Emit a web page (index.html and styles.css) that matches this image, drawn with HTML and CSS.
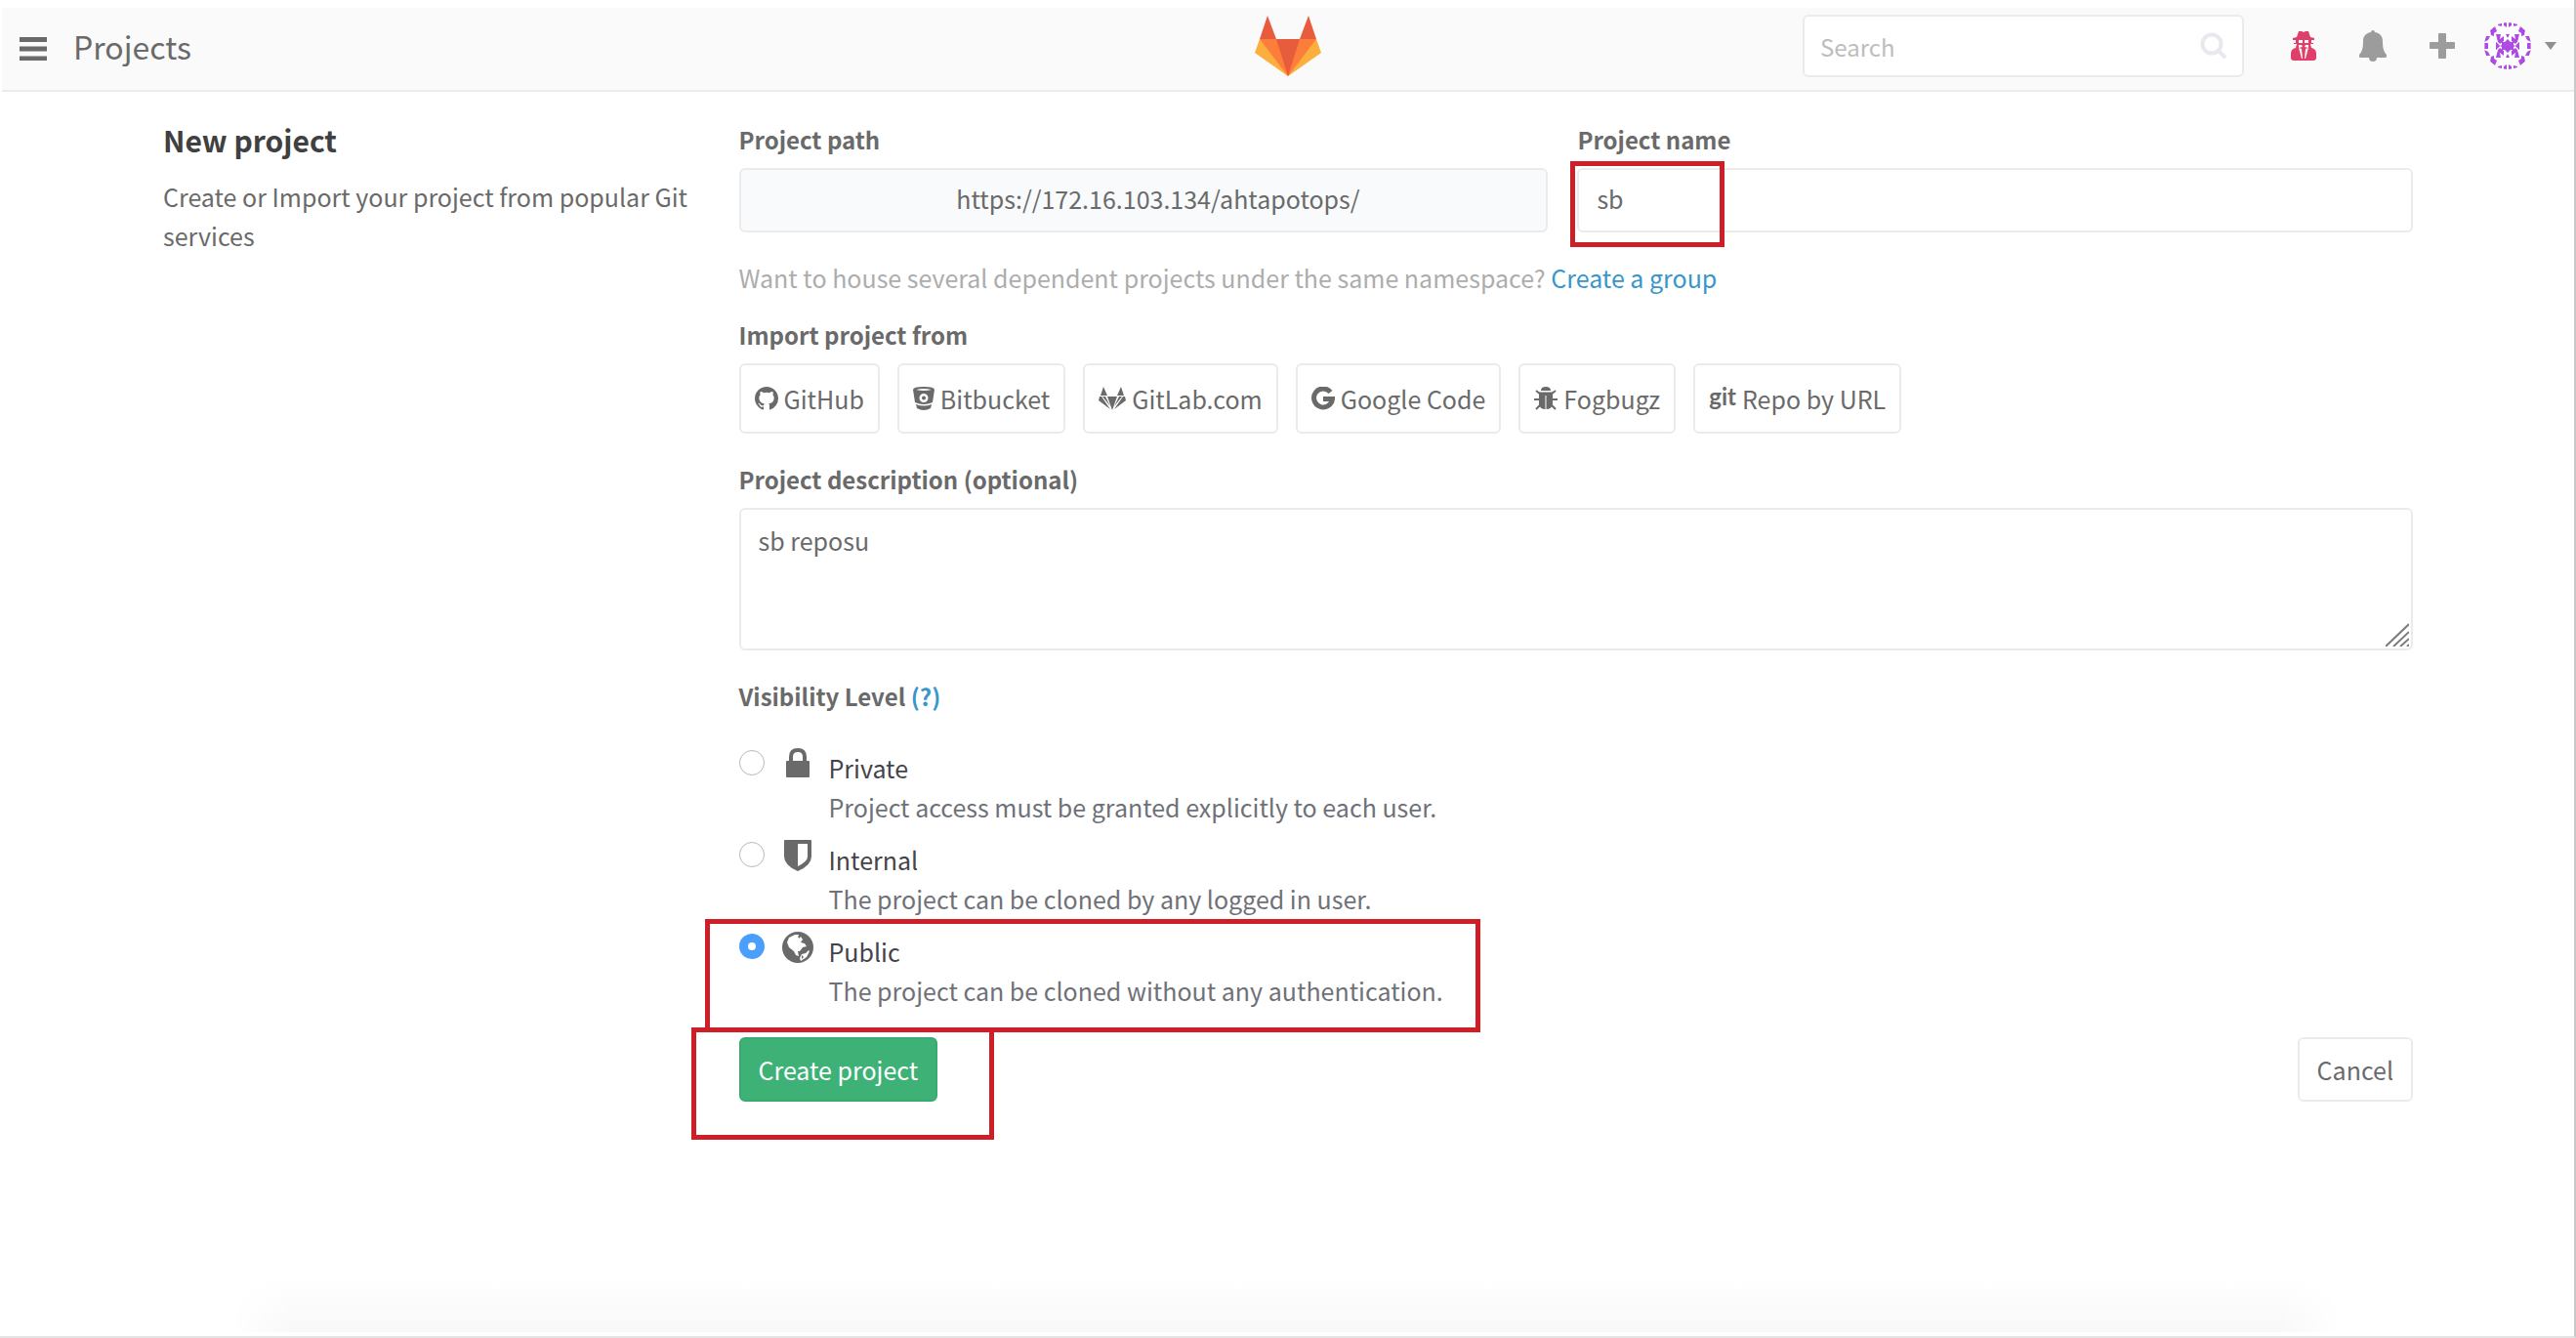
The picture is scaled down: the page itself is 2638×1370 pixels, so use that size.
FILE: index.html
```html
<!DOCTYPE html>
<html lang="en">
<head>
<meta charset="utf-8">
<title>New project</title>
<link rel="stylesheet" href="styles.css">
</head>
<body>
<header class="navbar">
  <div class="nav-side">
    <button class="icon-btn" type="button" aria-label="Menu">
      <svg width="28" height="24" viewBox="0 0 28 24" fill="#6a6a6a"><path d="M0 0h28v5H0zM0 9.500h28v5H0zM0 19.500h28v5H0z"/></svg>
    </button>
    <h1 class="page-name">Projects</h1>
  </div>
  <a class="logo" href="#" aria-label="Home">
    <svg width="68" height="62" viewBox="0 0 68 62">
      <path fill="#fcaf3e" d="M5 24 0 38l34 24 34-24-5-14z"/>
      <path fill="#fd7e3a" d="M5 24h58L34 62z"/>
      <path fill="#e65c3c" d="M22 24h24L34 62zM5 24 13 0l9 24zM63 24 55 0l-9 24z"/>
    </svg>
  </a>
  <div class="nav-side nav-end">
    <label class="search">
      <input type="search" placeholder="Search" aria-label="Search">
      <svg width="28" height="28" viewBox="0 0 28 28" fill="none" stroke="#e7e9ef" stroke-width="4" stroke-linecap="round"><circle cx="12" cy="12" r="9.500"/><path d="m19 19 6 6"/></svg>
    </label>
    <nav class="tools">
      <a href="#" aria-label="Admin area"><svg width="26" height="30" viewBox="0 0 26 30">
        <path fill="#df3f68" d="M8 0h3l2 1 2-1h3l2 6 4 1v2h-3v3h2v1h-3l1 4q5 1 5 6v4q0 3-3 3H3q-3 0-3-3v-4q0-5 5-6l1-4H3v-1h2V9H2V7l4-1z"/>
        <path fill="#fafafa" d="M8 9h4v3H8zM14 9h4v3h-4zM8 14h3l1 2-4 1zM15 14h3v3l-4-1zM8 17l3 1 1 10h-1zM18 17l-3 1-1 10h1z"/></svg></a>
      <a href="#" aria-label="Notifications"><svg width="28" height="32" viewBox="0 0 28 32"><path fill="#9c9c9c" d="M12 2a2 2 0 0 1 4 0c6 1 8 5 8 9 0 7 1 11 4 14v2q0 1-1 1h-9a4 4 0 0 1-8 0H1q-1 0-1-1v-2c3-3 4-7 4-14 0-4 2-8 8-9z"/></svg></a>
      <a href="#" aria-label="New"><svg width="26" height="26" viewBox="0 0 26 26"><path fill="#9c9c9c" d="M10 0h6q1 0 1 1v8h8q1 0 1 1v5q0 1-1 1h-8v9q0 1-1 1h-6q-1 0-1-1v-9H1q-1 0-1-1v-5q0-1 1-1h8V1q0-1 1-1z"/></svg></a>
      <a class="account" href="#" aria-label="Account">
        <svg width="48" height="48" viewBox="0 0 48 48">
          <defs><clipPath id="round"><circle cx="24" cy="24" r="24"/></clipPath></defs>
          <g clip-path="url(#round)"><path fill="#fff" d="M0 0h48v48H0z"/>
          <g fill="#ae4be3">
            <path id="corner" d="M12 12h5l-1 5 4-3v5l-4 3-2-2zM0 14l6 0-2 4-4 2zM1 22l3 1v4H0zM14 0l4 1v3l-4-1zM20 0h3v5l-3-2zM6 8l5-4 2 5-6 4zM7 13l3-2v3zM12 20l4 4-4 4z"/>
            <use href="#corner" transform="matrix(-1 0 0 1 48 0)"/>
            <use href="#corner" transform="matrix(1 0 0 -1 0 48)"/>
            <use href="#corner" transform="matrix(-1 0 0 -1 48 48)"/>
            <path d="m24 17 3 3h3v3l2 1-2 1v3h-3l-3 3-3-3h-3v-3l-2-1 2-1v-3h3zM22 12h4l-2 4zM22 36h4l-2-4z"/>
          </g></g>
        </svg>
        <svg width="12" height="8" viewBox="0 0 12 8"><path fill="#8f8f8f" d="M0 0h12L6 8z"/></svg>
      </a>
    </nav>
  </div>
</header>

<main class="content">
  <section class="intro">
    <h2>New project</h2>
    <p>Create or Import your project from popular Git services</p>
  </section>

  <form class="project-form">
    <div class="path-row">
      <div class="field">
        <label for="path">Project path</label>
        <input id="path" class="control path" type="text" value="https://172.16.103.134/ahtapotops/" readonly>
      </div>
      <div class="field marked name-field">
        <label for="name">Project name</label>
        <input id="name" class="control" type="text" value="sb">
      </div>
    </div>
    <p class="hint">Want to house several dependent projects under the same namespace? <a href="#">Create a group</a></p>

    <div class="field imports">
      <h3>Import project from</h3>
      <div class="import-list">
        <a class="btn" href="#"><svg width="24" height="24" viewBox="0 0 16 16"><path d="M8 0C3.580 0 0 3.580 0 8c0 3.540 2.290 6.530 5.470 7.590.4.070.550-.170.550-.380 0-.190-.010-.820-.010-1.490-2.010.370-2.530-.490-2.690-.940-.090-.230-.480-.940-.820-1.130-.280-.150-.680-.520-.010-.530.630-.010 1.080.580 1.230.820.720 1.210 1.870.870 2.330.660.070-.520.280-.870.510-1.070-1.780-.200-3.640-.890-3.640-3.950 0-.870.310-1.590.820-2.150-.080-.200-.360-1.020.080-2.120 0 0 .670-.210 2.200.820a7.600 7.600 0 0 1 4 0c1.530-1.040 2.200-.820 2.200-.820.440 1.100.160 1.920.080 2.120.510.560.820 1.270.820 2.150 0 3.070-1.870 3.750-3.650 3.950.290.250.540.730.540 1.480 0 1.070-.010 1.930-.010 2.200 0 .210.150.460.550.380A8 8 0 0 0 16 8c0-4.420-3.580-8-8-8z"/></svg>GitHub</a>
        <a class="btn" href="#"><svg width="22" height="24" viewBox="0 0 22 24"><path fill-rule="evenodd" d="M0 3q0-3 11-3t11 3l-2 13q-9 4-18 0zM3 3q8 2 16 0-8-2-16 0zM11 7a4.500 4.500 0 1 0 0 9 4.500 4.500 0 0 0 0-9zm0 2.500a2 2 0 1 1 0 4 2 2 0 0 1 0-4zM3 18q8 3 16 0l-1 4q-7 4-14 0z"/></svg>Bitbucket</a>
        <a class="btn" href="#"><svg width="28" height="24" viewBox="0 0 28 24"><path d="M5 0l4 9H2zM23 0l3 9h-7zM1 10l2 0 9 13L0 14zM27 10l-2 0-9 13 12-9zM4 10h3l5 10zM24 10h-3l-5 10zM9 10h10l-5 14z"/></svg>GitLab.com</a>
        <a class="btn" href="#"><svg width="24" height="24" viewBox="0 0 24 24" fill="none" stroke="#6a6a6a" stroke-width="5"><path fill="none" d="M19.500 5.500A9.500 9.500 0 1 0 21.500 12.500H12"/></svg>Google Code</a>
        <a class="btn" href="#"><svg width="24" height="24" viewBox="0 0 24 24"><path d="M7 4q0-4 5-4t5 4zM5 5.500h14V18q-1 5-6.500 5V9h-1v14Q6 23 5 18z"/><path fill="none" stroke="#6a6a6a" stroke-width="2" d="M2 4l5 4M22 4l-5 4M0 13h7M24 13h-7M2 23l5-5M22 23l-5-5"/></svg>Fogbugz</a>
        <a class="btn" href="#"><span class="git-mark">git</span>Repo by URL</a>
      </div>
    </div>

    <div class="field">
      <label for="description">Project description (optional)</label>
      <div class="area">
        <textarea id="description" class="control">sb reposu</textarea>
        <svg class="grip" width="24" height="24" viewBox="0 0 24 24" stroke="#7c7c7c" stroke-width="2"><path d="M0 24 24 1M8 24l16-15M15 24l9-8M22 24l2-2"/></svg>
      </div>
    </div>

    <fieldset class="levels">
      <legend>Visibility Level <a href="#">(?)</a></legend>
      <div class="level">
        <input type="radio" name="visibility" id="private">
        <svg width="24" height="30" viewBox="0 0 24 30"><path fill="none" stroke="#6a6a6a" stroke-width="4" d="M5 14V9q0-7 7-7t7 7v5"/><rect y="13" width="24" height="17" rx="1"/></svg>
        <label for="private"><span>Private</span>Project access must be granted explicitly to each user.</label>
      </div>
      <div class="level">
        <input type="radio" name="visibility" id="internal">
        <svg width="28" height="32" viewBox="0 0 28 32"><path fill-rule="evenodd" d="M1 0h26q1 0 1 1v16q0 9-14 15Q0 26 0 17V1q0-1 1-1zm13 4v23q10-5 10-10V4z"/></svg>
        <label for="internal"><span>Internal</span>The project can be cloned by any logged in user.</label>
      </div>
      <div class="level marked public-level">
        <input type="radio" name="visibility" id="public" checked>
        <svg width="32" height="32" viewBox="0 0 32 32"><circle cx="16" cy="16" r="16"/><path fill="#fff" d="M7 6l6-3 4 0-1 3 3-1 2 3-2 3 4 1 2 3-4 1-3 4-2 0 1 5-3-1-2-4-5-4-2-5zM18 27l2-4 4-1 3-3 1 1-3 6-6 4z"/><path d="M17 3l2 2-2 2zM20 24l2 2-2 2z"/></svg>
        <label for="public"><span>Public</span>The project can be cloned without any authentication.</label>
      </div>
    </fieldset>

    <div class="actions">
      <span class="marked create-wrap"><button class="btn create" type="submit">Create project</button></span>
      <button class="btn cancel" type="button">Cancel</button>
    </div>
  </form>
</main>
</body>
</html>
```
FILE: styles.css
```css
*, *::after { box-sizing: border-box; }

body {
  margin: 0;
  min-height: 100vh;
  display: flex;
  flex-direction: column;
  padding-top: 8px;
  border-right: 2px solid #c9c9c9;
  border-bottom: 2px solid #e4e4e4;
  background: #fff;
  color: #6a6a6a;
  font: 25px/40px "Noto Sans CJK SC", "Noto Sans", sans-serif;
}

h1, h2, h3, p { margin: 0; }
a { color: #3896c9; text-decoration: none; }
button, input, textarea { font: inherit; color: inherit; }
svg { display: block; flex: none; }

/* Top bar */
.navbar {
  display: flex;
  align-items: center;
  height: 86px;
  padding: 0 18px 6px;
  margin-left: 2px;
  background: #fafafa;
  border-bottom: 2px solid #ebebeb;
}
.nav-side { flex: 1; display: flex; align-items: center; gap: 27px; }
.nav-end { justify-content: flex-end; gap: 48px; }
.icon-btn { padding: 6px 0 0; border: 0; background: none; }
.page-name { font-size: 32px; font-weight: 400; }

.search { position: relative; width: 452px; }
.search input {
  width: 100%;
  height: 64px;
  padding: 0 50px 0 16px;
  border: 2px solid #ebebeb;
  border-radius: 6px;
  background: #fff;
  font-size: 24px;
  appearance: none;
}
.search input::placeholder { color: #bdbdbd; opacity: 1; }
.search svg { position: absolute; right: 17px; top: 18px; }
.tools { display: flex; align-items: center; gap: 44px; }
.account { display: flex; align-items: center; gap: 14px; margin-left: -14px; }

/* Page body */
.content {
  flex: 1;
  display: grid;
  grid-template-columns: 1fr 3fr;
  column-gap: 18px;
  align-items: start;
  padding: 29px 165px 200px 167px;
  position: relative;
}
.content::after {
  content: "";
  position: absolute;
  left: 9%;
  right: 9%;
  bottom: 4px;
  height: 52px;
  background: linear-gradient(#fff, #f8f8f8);
  -webkit-mask-image: linear-gradient(90deg, transparent, #000 3%, #000 97%, transparent);
  mask-image: linear-gradient(90deg, transparent, #000 3%, #000 97%, transparent);
}
.intro h2 { font-size: 30px; color: #404040; margin-bottom: 18px; }

.project-form { display: flex; flex-direction: column; }
.field { display: flex; flex-direction: column; }
.field > label, .field h3, legend { font-size: 24px; font-weight: 700; margin-bottom: 9px; }
.path-row { display: grid; grid-template-columns: 31fr 32fr; column-gap: 30px; }
.control {
  display: block;
  width: 100%;
  height: 66px;
  padding: 0 18px 4px;
  border: 2px solid #ebebeb;
  border-radius: 6px;
  background: #fff;
}
.path { background: #f8fafc; text-align: center; padding-left: 48px; }
.hint { margin: 26px 0 19px; color: #adadad; }

.import-list { display: flex; gap: 18px; }
.imports { margin-bottom: 27px; }
.btn {
  display: flex;
  align-items: center;
  gap: 6px;
  height: 72px;
  padding: 0 14px;
  border: 2px solid #ebebeb;
  border-radius: 6px;
  background: #fff;
  color: #6a6a6a;
  fill: #6a6a6a;
}
.git-mark { font: 700 24px/28px Lato, sans-serif; padding-bottom: 4px; }

.area { position: relative; }
textarea.control { height: 146px; padding: 11px 18px; resize: none; }
.grip { position: absolute; right: 4px; bottom: 4px; }

/* Visibility choices */
.levels {
  display: flex;
  flex-direction: column;
  gap: 13px;
  margin: 27px 0 28px;
  padding: 0;
  border: 0;
  fill: #6a6a6a;
}
.levels legend { padding: 0; margin-bottom: 32px; }
.level {
  display: grid;
  grid-template-columns: 28px 32px 1fr;
  column-gap: 16px;
  align-items: start;
}
.level svg { justify-self: center; margin-top: 1px; }
.level label { color: #6f7178; padding-top: 1px; }
.level span { display: block; color: #43444b; }
.level input {
  appearance: none;
  width: 26px;
  height: 26px;
  margin: 3px 0 0;
  border: 1px solid #b9b9b9;
  border-radius: 50%;
  background: #fff;
}
.level input:checked { border: 9px solid #4a9efc; }

.actions { display: flex; justify-content: space-between; }
.actions .btn { height: 66px; padding: 0 18px; }
.actions .create { background: #3eb276; border-color: #3aab70; color: #fff; }

/* Red call-out frames */
.marked { position: relative; }
.marked::after {
  content: "";
  position: absolute;
  border: 5px solid #ce1e28;
  pointer-events: none;
}
.name-field::after { left: -7px; top: 42px; width: 158px; height: 88px; }
.public-level::after { left: -35px; top: -12px; width: 794px; height: 116px; }
.create-wrap::after { left: -49px; top: -10px; width: 310px; height: 115px; }
```
